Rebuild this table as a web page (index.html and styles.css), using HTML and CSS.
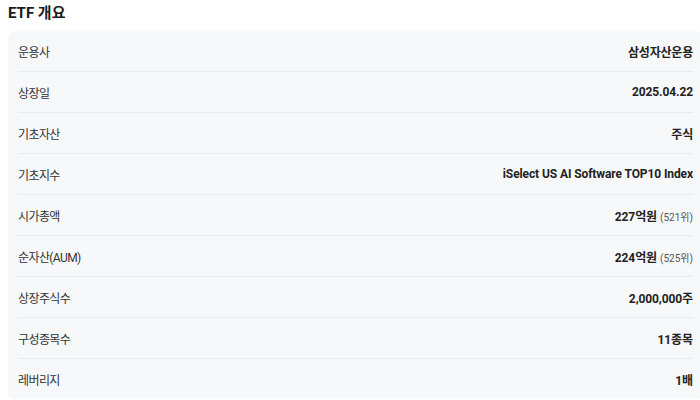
FILE: index.html
```html
<!DOCTYPE html>
<html lang="ko">
<head>
<meta charset="utf-8">
<link rel="stylesheet" href="styles.css">
</head>
<body>
<section class="overview">
  <h2 class="title">ETF 개요</h2>
  <div class="panel">
    <div class="row"><span class="label">운용사</span><span class="value ko">삼성자산운용</span></div>
    <div class="row"><span class="label">상장일</span><span class="value">2025.04.22</span></div>
    <div class="row"><span class="label">기초자산</span><span class="value ko">주식</span></div>
    <div class="row"><span class="label">기초지수</span><span class="value">iSelect US AI Software TOP10 Index</span></div>
    <div class="row"><span class="label">시가총액</span><span class="value">227억원<small class="rank">(521위)</small></span></div>
    <div class="row"><span class="label">순자산(AUM)</span><span class="value">224억원<small class="rank">(525위)</small></span></div>
    <div class="row"><span class="label">상장주식수</span><span class="value">2,000,000주</span></div>
    <div class="row"><span class="label">구성종목수</span><span class="value">11종목</span></div>
    <div class="row"><span class="label">레버리지</span><span class="value">1배</span></div>
  </div>
</section>
</body>
</html>
```
FILE: styles.css
```css
html, body {
  margin: 0;
  padding: 0;
  background: #ffffff;
  overflow: hidden;
}
body {
  font-family: Roboto, "Noto Sans CJK KR", sans-serif;
  color: #222;
}
.overview {
  width: 695px;
  padding: 4px 0 0 8px;
}
.title {
  margin: 0 0 9px 0;
  font-size: 15px;
  font-weight: 700;
  line-height: 18px;
  color: #1b1b1b;
}
.panel {
  background: #f7f8f9;
  border-radius: 7px;
  padding: 0 10px;
}
.row {
  display: flex;
  justify-content: space-between;
  align-items: center;
  height: 40px;
  border-bottom: 1px solid #eaeced;
  font-size: 12px;
}
.row:last-child {
  border-bottom: none;
}
.label {
  color: #333;
  font-weight: 400;
  letter-spacing: -0.6px;
}
.value {
  font-weight: 700;
  color: #222;
  letter-spacing: -0.1px;
}
.ko {
  letter-spacing: -0.2px;
}
.rank {
  font-size: 10px;
  font-weight: 400;
  color: #555;
  margin-left: 3px;
  letter-spacing: 0;
}
```
